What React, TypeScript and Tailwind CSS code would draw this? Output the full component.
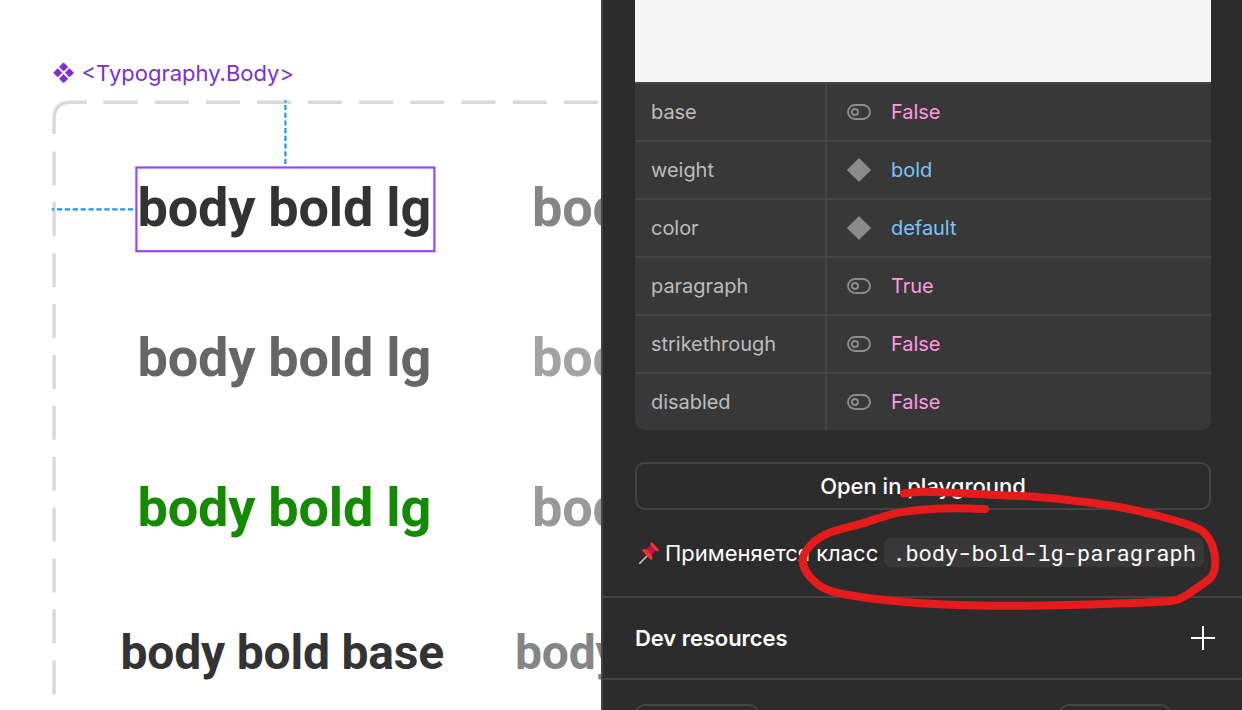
import React from "react";

const rows = [
  { name: "base", kind: "bool", value: "False" },
  { name: "weight", kind: "variant", value: "bold" },
  { name: "color", kind: "variant", value: "default" },
  { name: "paragraph", kind: "bool", value: "True" },
  { name: "strikethrough", kind: "bool", value: "False" },
  { name: "disabled", kind: "bool", value: "False" },
];

const strokePoints: [number, number][] = [
  [904, 493.5], [923, 491.8], [977, 494], [1040, 497.3], [1085, 502], [1123, 507.7], [1157, 515.5],
  [1190, 525.3], [1204, 532.5], [1212.5, 546], [1215.3, 562], [1212, 576], [1200, 585.7],
  [1183, 597.3], [1173, 600.7], [1123, 603.3], [1057, 605.2], [990, 605.7], [940, 604.3],
  [900, 601.5], [861, 597], [828, 590], [810, 576.7], [802.8, 560], [811.7, 544], [830, 532.5],
  [861.7, 523.7], [893, 513.8], [921.7, 509.8], [953, 508.2], [985, 509],
];

function smoothPath(pts: [number, number][]) {
  let d = `M${pts[0][0]} ${pts[0][1]}`;
  for (let i = 0; i < pts.length - 1; i++) {
    const p0 = pts[Math.max(i - 1, 0)];
    const p1 = pts[i];
    const p2 = pts[i + 1];
    const p3 = pts[Math.min(i + 2, pts.length - 1)];
    const len = Math.hypot(p2[0] - p1[0], p2[1] - p1[1]);
    const l0 = Math.hypot(p2[0] - p0[0], p2[1] - p0[1]);
    const l1 = Math.hypot(p3[0] - p1[0], p3[1] - p1[1]);
    const a = len / l0 / 3;
    const b = len / l1 / 3;
    d += `C${p1[0] + (p2[0] - p0[0]) * a} ${p1[1] + (p2[1] - p0[1]) * a} ${p2[0] - (p3[0] - p1[0]) * b} ${p2[1] - (p3[1] - p1[1]) * b} ${p2[0]} ${p2[1]}`;
  }
  return d;
}

function BoolIcon() {
  return (
    <svg width="24" height="16" viewBox="0 0 24 16" fill="none" stroke="#8c8c8c" strokeWidth="1.9">
      <rect x="1" y="1" width="22" height="14" rx="7" />
      <circle cx="8" cy="8" r="3" />
    </svg>
  );
}

function VariantIcon() {
  return (
    <svg width="24" height="24" viewBox="0 0 24 24">
      <path d="M12 .8 23.2 12 12 23.2.8 12Z" fill="#8b8b8b" stroke="#8b8b8b" strokeWidth="1.2" strokeLinejoin="round" />
    </svg>
  );
}

function ComponentIcon() {
  return (
    <svg width="22" height="22" viewBox="0 0 22 22" fill="#7b2fd8" stroke="#7b2fd8" strokeWidth=".6" strokeLinejoin="round" className="shrink-0">
      <path d="M10.6 .7 14.8 4.9 10.6 9.1 6.4 4.9Z" />
      <path d="M10.6 12.5 14.8 16.7 10.6 20.9 6.4 16.7Z" />
      <path d="M4.7 6.6 8.9 10.8 4.7 15 .5 10.8Z" />
      <path d="M16.5 6.6 20.7 10.8 16.5 15 12.3 10.8Z" />
    </svg>
  );
}

function PinIcon() {
  return (
    <svg width="24" height="24" viewBox="0 0 24 24" className="shrink-0">
      <g transform="translate(-1.6 .6)">
        <path d="M4.3 21.8 11.4 14.6" stroke="#bcc5c9" strokeWidth="1.6" strokeLinecap="round" />
        <path d="M9 9.4 15 4.2 20 9.2 15 15.2Z" fill="#c4114d" />
        <path d="M7.4 8Q9.6 6.6 11.6 8.4L16 12.8Q18 15.4 16.6 18Q16 18.8 15 17.8L7.2 10Q6.4 8.8 7.4 8Z" fill="#fa3126" />
        <path d="M15.2 1.2Q16 .4 17 1.2L23 7.4Q23.8 8.2 23 9.2Q21.4 10.2 19.4 8.2L16 4.8Q14.2 2.6 15.2 1.2Z" fill="#fa3126" />
      </g>
    </svg>
  );
}

const node = "absolute whitespace-pre font-['Roboto',sans-serif] font-bold leading-[64px] tracking-[-0.2px]";

function Canvas() {
  return (
    <section className="relative h-full w-[601px] shrink-0 overflow-hidden bg-white">
      <svg className="absolute inset-0" width="601" height="710" fill="none">
        <g stroke="#d9d9d9" strokeWidth="3.4">
          <path d="M86.7 102.2H71Q54.1 102.2 54.1 119V134" />
          <path d="M103.4 102.2H610" strokeDasharray="34.1 17.05" />
          <path d="M54.1 151.5V710" strokeDasharray="34 16.87" />
        </g>
        <g stroke="#1b96f3" strokeWidth="2.2">
          <path d="M285.4 100.3V168" strokeDasharray="5.1 2.6" strokeDashoffset="3" />
          <path d="M52 209.3H136" strokeDasharray="5.2 2.7" strokeDashoffset="3" />
        </g>
        <rect x="136.4" y="167.5" width="298" height="83.7" stroke="#9747ff" strokeWidth="2.2" />
      </svg>
      <div className="absolute left-[53px] top-[60px] flex h-[26px] items-center gap-[6.5px] text-[#7b2fd8]">
        <ComponentIcon />
        <span className="whitespace-pre font-['Inter',sans-serif] text-[22px] leading-[26px]">&lt;Typography.Body&gt;</span>
      </div>
      <span className={`${node} left-[137.5px] top-[176px] text-[54px] text-[#333333]`}>body bold lg</span>
      <span className={`${node} left-[137.5px] top-[326px] text-[54px] text-[#666666]`}>body bold lg</span>
      <span className={`${node} left-[137.5px] top-[476px] text-[54px] text-[#148a00]`}>body bold lg</span>
      <span className={`${node} left-[120.5px] top-[621px] text-[48px] text-[#333333]`}>body bold base</span>
      <span className={`${node} left-[532px] top-[176px] text-[54px] text-[#858585]`}>body</span>
      <span className={`${node} left-[532px] top-[326px] text-[54px] text-[#a3a3a3]`}>body</span>
      <span className={`${node} left-[532px] top-[476px] text-[54px] text-[#999999]`}>body</span>
      <span className={`${node} left-[515px] top-[621px] text-[48px] text-[#858585]`}>body</span>
    </section>
  );
}

export default function App() {
  return (
    <main className="relative flex h-[710px] w-[1242px] overflow-hidden bg-white font-['Inter',sans-serif]">
      <Canvas />
      <aside className="flex min-w-0 flex-1 flex-col border-l-2 border-[#444444] bg-[#2c2c2c] text-white">
        <div className="ml-8 mr-[31px] h-[82px] shrink-0 bg-[#f5f5f5]" />
        <div className="ml-8 mr-[31px] shrink-0 overflow-hidden rounded-b-[10px] bg-[#383838]">
          {rows.map((r) => (
            <div key={r.name} className="flex h-[58px] border-t-2 border-[#444444] text-[20px] font-[430] tracking-[-0.04px]">
              <div className="flex w-48 items-center border-r-2 border-[#444444] pb-px pl-4 text-[#bdbdbd]">{r.name}</div>
              <div className="flex items-center pb-px pl-5">
                <div className="flex w-11">{r.kind === "bool" ? <BoolIcon /> : <VariantIcon />}</div>
                <span className={r.kind === "bool" ? "text-[#ff99e0]" : "text-[#7cc4f8]"}>{r.value}</span>
              </div>
            </div>
          ))}
        </div>
        <button className="ml-8 mr-[31px] mt-8 h-12 shrink-0 rounded-[10px] border-2 border-[#444444] text-[22px] font-[480] leading-none">
          Open in playground
        </button>
        <div className="flex h-[86px] shrink-0 items-center pl-[34px] text-[22px]">
          <PinIcon />
          <span className="ml-1 whitespace-pre font-[430] tracking-[-0.02px]">Применяется класс</span>
          <code className="mb-0.5 ml-1.5 flex h-[29px] items-center rounded-md bg-[#383838] px-2 font-['Roboto_Mono','DejaVu_Sans_Mono',monospace] text-[22px] font-[450]">
            .body-bold-lg-paragraph
          </code>
        </div>
        <div className="flex h-[84px] shrink-0 items-center justify-between border-y-2 border-[#444444] pl-8 pr-[27px]">
          <h2 className="text-[22px] font-semibold tracking-[-0.06px]">Dev resources</h2>
          <svg width="24" height="24" viewBox="0 0 24 24" stroke="white" strokeWidth="2">
            <path d="M12 0V24M0 12H24" />
          </svg>
        </div>
        <div className="flex shrink-0 justify-between pl-8 pr-[71px] pt-6">
          <div className="h-12 w-[124px] rounded-[10px] border-2 border-[#444444]" />
          <div className="h-12 w-[112px] rounded-[10px] border-2 border-[#444444]" />
        </div>
      </aside>
      <svg className="pointer-events-none absolute inset-0" width="1242" height="710" fill="none">
        <path d={smoothPath(strokePoints)} stroke="#e61c1c" strokeWidth="8" strokeLinecap="round" strokeLinejoin="round" />
      </svg>
    </main>
  );
}
